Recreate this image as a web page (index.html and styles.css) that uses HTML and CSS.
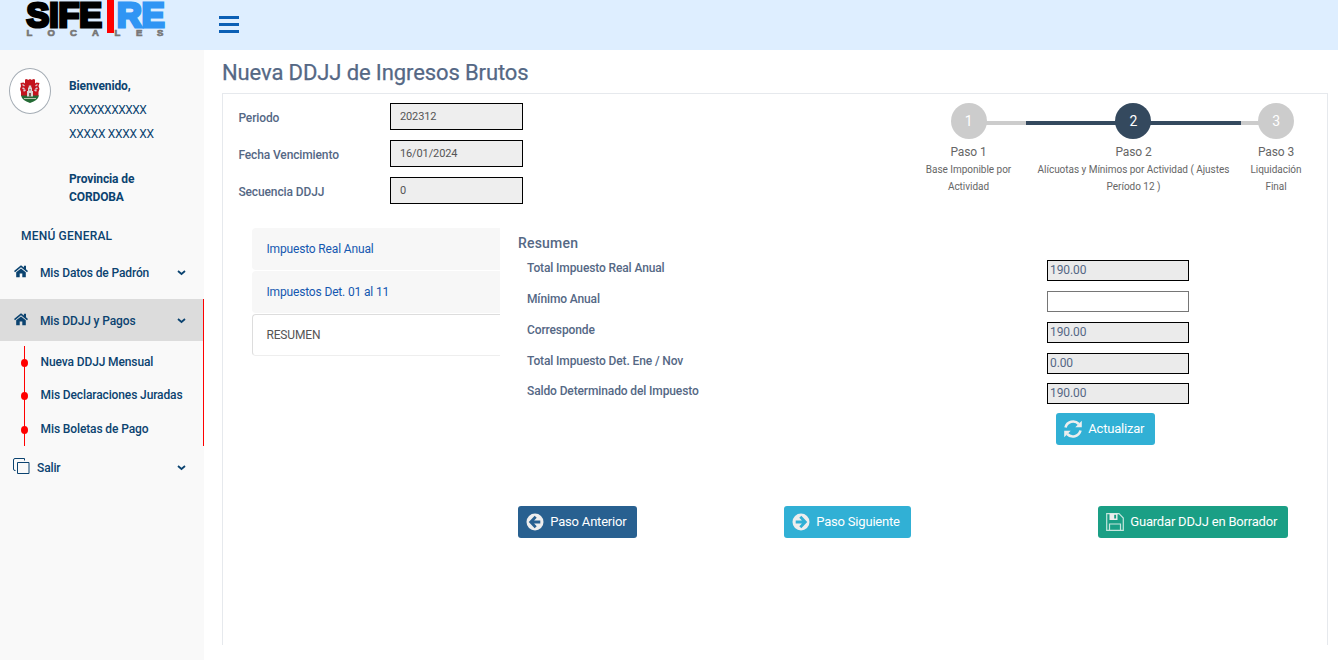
FILE: index.html
```html
<!DOCTYPE html>
<html lang="es">
<head>
<meta charset="utf-8">
<title>Nueva DDJJ de Ingresos Brutos</title>
<link rel="stylesheet" href="styles.css">
</head>
<body>
<svg class="defs" width="0" height="0" aria-hidden="true">
  <symbol id="home" viewBox="0 0 14 13"><path d="M7 .2 0 6l1 1.200L7 2.300l6 4.900L14 6l-2-1.700V.800H9.900v1.800z"/><path d="M7 3.400 2.200 7.300V12.200h3.500V8.500h2.600v3.700h3.500V7.300z"/></symbol>
  <symbol id="chev" viewBox="0 0 9 6"><path d="M1 1l3.500 3L8 1" fill="none" stroke="currentColor" stroke-width="1.8"/></symbol>
</svg>
<header class="topbar">
  <svg class="logo" width="145" height="44" viewBox="0 0 145 44">
    <text class="logo-main" x="1.500" y="27" textLength="75.500" lengthAdjust="spacingAndGlyphs">SIFE</text>
    <text class="logo-main logo-blue" x="92" y="27" textLength="47.500" lengthAdjust="spacingAndGlyphs">RE</text>
    <rect x="82" y="0" width="7" height="33" fill="#f00"/>
    <text class="logo-sub" x="1.5 22.500 45 67 89.5 111 132" y="36">LOCALES</text>
  </svg>
  <div class="burger"><i></i><i></i><i></i></div>
</header>
<div class="body">
  <aside class="sidebar">
    <div class="profile">
      <div class="avatar">
        <svg width="22" height="26" viewBox="0 0 22 26">
          <path d="M1.500 5l3-.5 1.500 1V1.500l2-.5 1 1 2-1 2 1 1-1 2 .5v4l1.500-1 3 .5-1 3 1 3-1 3v4H2v-4l-1-3 1-3z" fill="#c3141e"/>
          <path d="M2 17.500h18q-1 5-9 7.500-8-2.500-9-7.500z" fill="#246b35"/>
          <path d="M8 18.500V13h1V9.500h.8V7.500h2.400v2h.8V13h1v5.500z" fill="#ddd5d5"/>
          <path d="M10.200 18.500V15h1.600v3.500zM10.500 11h1v1.500h-1z" fill="#64372f"/>
          <path d="M3.500 6.500l2 1.500M3.500 10l2 1M4.500 13l2-1M18.500 6.500l-2 1.500M18.500 10l-2 1M17.500 13l-2-1" stroke="#d8c9d3" stroke-width="1.400"/>
          <path d="M5 20.500h12" fill="none" stroke="#b7c2ae"/>
        </svg>
      </div>
      <div class="who">
        <b class="hello">Bienvenido,</b>
        <span class="id">XXXXXXXXXXX</span>
        <span>XXXXX XXXX XX</span>
        <b class="prov">Provincia de CORDOBA</b>
      </div>
    </div>
    <h3 class="menu-title">MENÚ GENERAL</h3>
    <nav>
      <a class="item"><svg class="ico" width="14" height="13"><use href="#home"/></svg><span>Mis Datos de Padrón</span><svg class="chev" width="9" height="6"><use href="#chev"/></svg></a>
      <div class="open">
        <a class="item active"><svg class="ico" width="14" height="13"><use href="#home"/></svg><span>Mis DDJJ y Pagos</span><svg class="chev" width="9" height="6"><use href="#chev"/></svg></a>
        <ul class="sub">
          <li>Nueva DDJJ Mensual</li>
          <li>Mis Declaraciones Juradas</li>
          <li>Mis Boletas de Pago</li>
        </ul>
      </div>
      <a class="item exit"><svg class="ico" width="17" height="17" viewBox="0 0 17 17"><path d="M2.500 12.500H2Q.500 12.500 .500 11V2Q.500 .500 2 .500h9.500v2M4.500 4.500h11.500v11H4.500z" fill="none" stroke="currentColor"/></svg><span>Salir</span><svg class="chev" width="9" height="6"><use href="#chev"/></svg></a>
    </nav>
  </aside>
  <main class="main">
    <h1 class="title">Nueva DDJJ de Ingresos Brutos</h1>
    <section class="panel">
      <div class="top">
        <div class="fields">
          <label>Periodo</label><div class="field">202312</div>
          <label>Fecha Vencimiento</label><div class="field">16/01/2024</div>
          <label>Secuencia DDJJ</label><div class="field">0</div>
        </div>
        <div class="steps">
          <div class="step first"><span class="dot">1</span><span class="name">Paso 1</span><small>Base Imponible por<br>Actividad</small></div>
          <div class="step current"><span class="dot">2</span><span class="name">Paso 2</span><small>Alícuotas y Mínimos por Actividad ( Ajustes<br>Período 12 )</small></div>
          <div class="step last"><span class="dot">3</span><span class="name">Paso 3</span><small>Liquidación<br>Final</small></div>
        </div>
      </div>
      <div class="content">
        <div class="tabs">
          <a>Impuesto Real Anual</a>
          <a>Impuestos Det. 01 al 11</a>
          <a class="selected">RESUMEN</a>
        </div>
        <div class="summary">
          <h2>Resumen</h2>
          <div class="row"><b>Total Impuesto Real Anual</b><div class="value">190.00</div></div>
          <div class="row"><b>Mínimo Anual</b><div class="value editable"></div></div>
          <div class="row"><b>Corresponde</b><div class="value">190.00</div></div>
          <div class="row short"><b>Total Impuesto Det. Ene / Nov</b><div class="value">0.00</div></div>
          <div class="row"><b>Saldo Determinado del Impuesto</b><div class="value">190.00</div></div>
          <button class="btn info refresh"><svg width="18" height="18" viewBox="0 0 18 18"><path d="M1.500 7.500C3 1.500 10.500-.5 14.800 4M16.500 10.500C15 16.500 7.500 18.500 3.200 14" fill="none" stroke="#eee" stroke-width="2.600"/><path d="M17.800.8v6.500h-6.500zM.2 17.200v-6.500h6.500z" fill="#eee"/></svg><span>Actualizar</span></button>
          <div class="actions">
            <button class="btn prev"><svg width="18" height="18" viewBox="0 0 18 18"><circle cx="9" cy="9" r="8.500" fill="#eee"/><path d="M9.700 3.800L4.700 9l5 5.200M5.200 9H14.300" fill="none" stroke="#286090" stroke-width="2.800"/></svg><span>Paso Anterior</span></button>
            <button class="btn info next"><svg width="18" height="18" viewBox="0 0 18 18"><circle cx="9" cy="9" r="8.500" fill="#eee"/><path d="M8.300 3.800l5 5.200-5 5.200M12.800 9H3.700" fill="none" stroke="#31b0d5" stroke-width="2.800"/></svg><span>Paso Siguiente</span></button>
            <button class="btn save"><svg width="18" height="18" viewBox="0 0 18 18"><path d="M.7.700H13L17.300 5v12.300H.700zM3.500 17V11h11v6" fill="none" stroke="#c5e6de" stroke-width="1.200"/><path d="M3.500.500h8V7h-8zM8.200 1.700v3.800h1.900V1.700z" fill="#eee" fill-rule="evenodd"/></svg><span>Guardar DDJJ en Borrador</span></button>
          </div>
        </div>
      </div>
    </section>
  </main>
</div>
</body>
</html>
```
FILE: styles.css
```css
* { box-sizing: border-box; }
body { margin: 0; height: 660px; overflow: hidden; background: #fff; font: 12px/18px Roboto, sans-serif; letter-spacing: -.12px; color: #556885; }
.defs { position: absolute; }
h1, h2, h3, ul { margin: 0; padding: 0; font-weight: 500; }
b, label { font-weight: 500; }
.topbar { height: 50px; background: #deeeff; display: flex; padding-left: 25px; }
.logo { flex: none; letter-spacing: 0; }
.logo-main { font: bold 35px "Liberation Sans", sans-serif; fill: #000; stroke: #000; stroke-width: 3.2px; }
.logo-blue { fill: #2f95f4; stroke: #2f95f4; }
.logo-sub { font: bold 9.5px "Liberation Sans", sans-serif; fill: #777; stroke: #777; stroke-width: .7px; }
.burger { width: 20px; margin: 16px 0 0 49px; display: flex; flex-direction: column; gap: 4px; }
.burger i { height: 3px; background: #0b5fb5; }
.body { display: flex; height: 610px; }
.sidebar { width: 204px; flex: none; background: #f9f9f9; color: #0b4370; }
.profile { display: flex; height: 163px; padding: 18px 0 0 9px; }
.avatar { width: 42px; height: 46px; border: 1px solid #a5adb5; border-radius: 50%; background: #fff; display: flex; align-items: center; justify-content: center; }
.who { margin-left: 18px; width: 90px; display: flex; flex-direction: column; white-space: nowrap; }
.who .hello { font-weight: 700; line-height: 18px; margin: 9px 0 3px; }
.who span { line-height: 24px; height: 24px; letter-spacing: -.3px; }
.who .id { letter-spacing: -.5px; }
.who .prov { font-weight: 700; margin-top: 24px; white-space: normal; }
.menu-title { font-size: 12px; line-height: 18px; margin: 14px 0 15px 21px; letter-spacing: .2px; }
.item { display: flex; align-items: center; height: 42px; padding: 0 18px 0 14px; font-weight: 500; }
nav > .item:first-child { margin-top: -8px; margin-bottom: 5px; }
.ico { fill: currentColor; flex: none; margin-bottom: 3px; }
.item span { margin-left: 12px; flex: 1; }
.item .chev { flex: none; }
.active { background: #dcdcdc; padding: 1px 17px 0 14px; }
.open { border-right: 1px solid #f00; height: 147px; }
.sub { list-style: none; margin: 5px 0 0 24px; height: 100px; border-left: 1px solid #f00; font-weight: 500; }
.sub li { height: 33.400px; line-height: 32px; padding-left: 15.600px; position: relative; }
.sub li::before { content: ""; position: absolute; left: -4px; top: 13px; width: 7px; height: 8px; border-radius: 50%; background: #f00; }
.exit { padding: 2px 18px 0 13px; }
.exit span { margin-left: 7px; }
.main { flex: 1; padding: 9px 10px 0 18px; }
.title { font-size: 22px; line-height: 28px; height: 34px; font-weight: 400; letter-spacing: -.11px; -webkit-text-stroke: .25px; }
.panel { height: 552px; border: 1px solid #e6e9ed; border-bottom: 0; padding: 9px 16px 0 15px; }
.top { display: flex; justify-content: space-between; height: 125px; }
.fields { display: grid; grid-template-columns: 152px 133px; grid-auto-rows: 27px; row-gap: 10px; }
.fields label { line-height: 30px; padding-left: .4px; }
.field { border: 1px solid #000; background: #eee; padding-left: 9px; font-size: 11px; line-height: 25px; color: #555; }
.steps { display: flex; height: 95px; color: #666; }
.step { display: flex; flex-direction: column; align-items: center; text-align: center; background: linear-gradient(#ccc, #ccc) no-repeat 0 18px / 100% 4px; white-space: nowrap; }
.first { width: 115px; background-position: 100% 18px; background-size: 50% 4px; }
.current { width: 215px; background-image: linear-gradient(#34495e, #34495e); }
.last { width: 70px; background-size: 50% 4px; }
.dot { width: 36px; height: 36px; border-radius: 50%; background: #ccc; color: #fff; font-size: 14px; line-height: 36px; }
.current .dot { background: #34495e; margin-right: 1px; padding-left: .5px; }
.name { line-height: 18px; margin-top: 4px; }
.step small { font-size: 10px; line-height: 17px; letter-spacing: -.03px; }
.content { display: flex; }
.tabs { width: 248px; margin-left: 14px; display: flex; flex-direction: column; gap: 1px; height: 128px; }
.tabs a { height: 42px; line-height: 42px; padding-left: 14.400px; background: #f7f7f7; color: #1558b0; border-radius: 4px 0 0 4px; letter-spacing: -.15px; }
.tabs .selected { background: #fff; color: #555; border: 1px solid #ddd; border-right: 0; border-bottom-color: #eee; line-height: 40px; padding-left: 13.400px; }
.summary { flex: 1; margin-left: 18px; }
.summary h2 { font-size: 14px; line-height: 20px; margin: 5px 0 7px; letter-spacing: .2px; }
.row { display: flex; justify-content: space-between; height: 31px; padding: 0 122px 0 9px; }
.short { height: 30px; }
.row b { line-height: 16px; }
.value { width: 142px; height: 21px; border: 1px solid #000; background: #ebebeb; line-height: 19px; padding-left: 2px; letter-spacing: -.1px; }
.editable { background: #fff; border-color: #767676; }
.btn { height: 32px; border: 0; border-radius: 3px; color: #fff; font: 13px Roboto, sans-serif; letter-spacing: -.2px; display: flex; align-items: center; gap: 6.500px; padding: 0 0 0 7.500px; white-space: nowrap; }
.btn span { padding: 0 0 2px .3px; }
.info { background: #31b0d5; }
.refresh { width: 99px; margin: -1px 0 0 538px; }
.actions { display: flex; margin-top: 61px; }
.prev { width: 119px; background: #286090; }
.next { width: 127px; margin-left: 147px; }
.save { width: 190px; margin-left: 187px; background: #1a9f85; }
```
